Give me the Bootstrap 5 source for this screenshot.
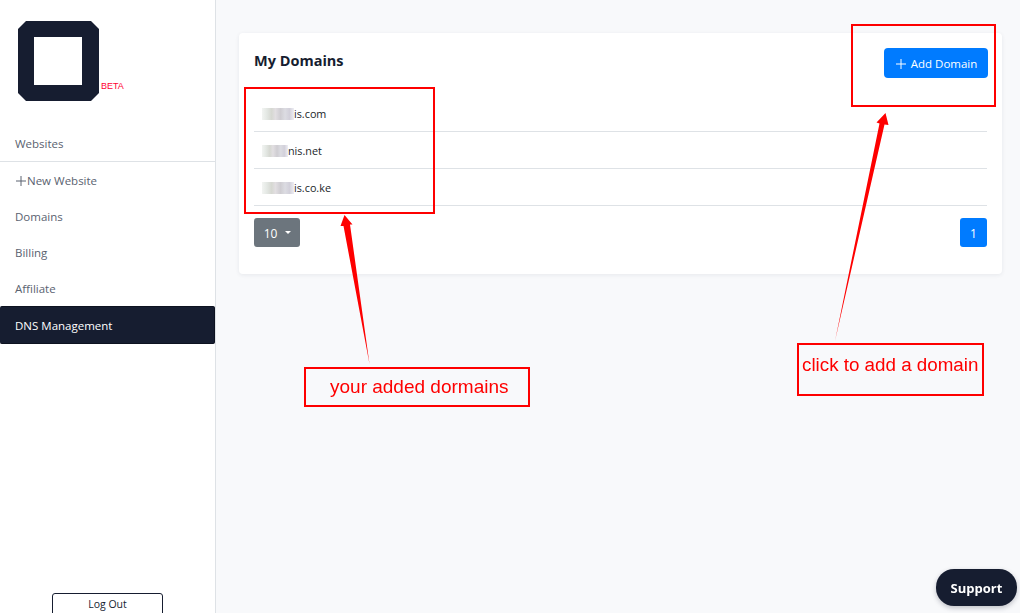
<!DOCTYPE html>
<html lang="en">
<head>
    <meta charset="UTF-8">
    <meta name="viewport" content="width=device-width, initial-scale=1.0">
    <title>My Domains</title>
    <link href="https://cdn.jsdelivr.net/npm/bootstrap@5.3.2/dist/css/bootstrap.min.css" rel="stylesheet">
    <style>
        html, body { height: 100%; overflow: hidden; }
        body { font-family: "Open Sans", "Noto Sans", sans-serif; font-size: 11.5px; color: #161d30; background: #f8f9fb; }
        .app-shell { height: 613px; }
        .side-bar { width: 216px; flex: none; background: #fff; border-right: 1px solid #dee2e6; }
        .logo-wrap { height: 120px; padding: 21px 0 0 18px; }
        .logo-beta { color: #ff0033; font-family: "Liberation Sans", sans-serif; font-size: 9px; line-height: 1; margin: 0 0 10px 2px; }
        .side-item { display: block; height: 36px; line-height: 34px; padding-left: 15px; color: #5a6270; text-decoration: none; }
        .side-first { border-bottom: 1px solid #dee2e6; height: 42px; line-height: 47px; }
        .side-new { display: flex; align-items: center; height: 38px; }
        .side-new svg { margin: 0 1px 0 1px; }
        .side-active { height: 38px; line-height: 37px; margin-top: -2px; color: #fff; font-weight: 500; background: #161d30; border: 1px solid #0d1220; border-left: 0; border-radius: 2px; padding-left: 15px; }
        .logout-btn { width: 111px; height: 28px; margin: auto 0 -8px 52px; padding: 0 0 5px; background: #fff; color: #161d30; font-size: 10.5px; border: 1px solid #161d30; border-radius: 3px; }
        .main-pane { padding: 33px 18px 0 23px; }
        .domains-card { height: 241px; border: 0; border-radius: 4px; box-shadow: 0 1px 4px rgba(30, 40, 70, .08); padding: 15px 15px 0; }
        .domains-title { font-size: 14.5px; font-weight: 700; margin: 4px 0 0; }
        .add-btn { width: 104px; height: 30px; margin-right: -1px; padding: 2px 0 0 1px; font-size: 11.5px; background: #007bff; border: 0; border-radius: 4px; display: flex; align-items: center; justify-content: center; gap: 5px; }
        .domain-list { margin-top: 17px; }
        .domain-row { height: 37px; padding: 2px 0 0 8px; display: flex; align-items: center; font-size: 10.8px; border-color: #dee2e6; background: transparent; }
        .blur-patch { display: inline-block; height: 12px; background: linear-gradient(90deg, #f2f4f2 0, #e4e8e4 15%, #d6d8d2 30%, #e2dfe2 42%, #cfcdd2 58%, #dcdce2 72%, #d2d0da 86%, #eeeef4 100%); }
        .size-btn { width: 46px; height: 29px; padding: 2px 0 0 1px; font-size: 12px; background: #6c757d; border: 0; border-radius: 3px; }
        .size-btn::after { margin-left: 8px; }
        .page-btn { width: 27px; height: 29px; padding: 2px 0 0; font-size: 12px; background: #007bff; border: 0; border-radius: 3px; }
        .support-btn { position: fixed; left: 936px; top: 569px; width: 81px; height: 37px; padding: 2px 0 0; background: #161d30; color: #fff; font-size: 13px; font-weight: 700; border: 0; border-radius: 18px; box-shadow: 0 2px 5px rgba(20, 25, 45, .25); }
        .note-layer { position: fixed; left: 0; top: 0; pointer-events: none; }
        .note-box { position: fixed; border: 2px solid #fe0000; color: #fe0000; font-family: "Liberation Sans", sans-serif; font-size: 19px; white-space: nowrap; }
        .note-added { left: 304px; top: 367px; width: 226px; height: 40px; line-height: 36px; padding-left: 24px; }
        .note-click { left: 797px; top: 343px; width: 187px; height: 53px; line-height: 40px; padding-left: 3px; font-size: 18.8px; }
    </style>
</head>
<body>
    <div class="d-flex app-shell">
        <aside class="side-bar d-flex flex-column">
            <div class="logo-wrap">
                <div class="d-flex align-items-end">
                    <svg width="81" height="80" viewBox="0 0 81 80">
                        <path fill-rule="evenodd" fill="#161d30" d="M8 0H73L81 8V72L73 80H8L0 72V8ZM16 16V64H64V16Z"/>
                    </svg>
                    <span class="logo-beta">BETA</span>
                </div>
            </div>
            <a class="side-item side-first" href="#">Websites</a>
            <a class="side-item side-new" href="#">
                <svg width="10" height="10" viewBox="0 0 10 10"><path d="M5 0V10M0 5H10" stroke="#5a6270" stroke-width="1"/></svg>New Website
            </a>
            <a class="side-item" href="#">Domains</a>
            <a class="side-item" href="#">Billing</a>
            <a class="side-item" href="#">Affiliate</a>
            <a class="side-item side-active" href="#">DNS Management</a>
            <button class="btn logout-btn" type="button">Log Out</button>
        </aside>

        <main class="main-pane flex-grow-1">
            <div class="card domains-card">
                <div class="d-flex justify-content-between align-items-start">
                    <h5 class="domains-title">My Domains</h5>
                    <button class="btn btn-primary add-btn" type="button">
                        <svg width="10" height="10" viewBox="0 0 10 10"><path d="M5 0V10M0 5H10" stroke="#fff" stroke-width="1"/></svg>Add Domain
                    </button>
                </div>
                <div class="list-group list-group-flush domain-list">
                    <div class="list-group-item domain-row"><span class="blur-patch" style="width:32px"></span>is.com</div>
                    <div class="list-group-item domain-row"><span class="blur-patch" style="width:26px"></span>nis.net</div>
                    <div class="list-group-item domain-row border-bottom"><span class="blur-patch" style="width:32px"></span>is.co.ke</div>
                </div>
                <div class="d-flex justify-content-between mt-2 pt-1">
                    <button class="btn btn-secondary dropdown-toggle size-btn" type="button">10</button>
                    <button class="btn btn-primary page-btn" type="button">1</button>
                </div>
            </div>
        </main>
    </div>

    <button class="btn support-btn" type="button">Support</button>

    <!-- annotations drawn over the screenshot -->
    <svg class="note-layer" width="1020" height="613" viewBox="0 0 1020 613">
        <rect x="245" y="88" width="189" height="125" fill="none" stroke="#fe0000" stroke-width="2"/>
        <rect x="852" y="25" width="143" height="81" fill="none" stroke="#fe0000" stroke-width="2"/>
        <polygon fill="#fe0000" points="344.5,215 352.5,224.5 350,224.5 369.5,364 343.5,226 340.5,226"/>
        <polygon fill="#fe0000" points="885.5,113 888.5,125 884.5,124.5 835,341 879.5,123.5 876.5,122.5"/>
    </svg>
    <div class="note-box note-added">your added dormains</div>
    <div class="note-box note-click">click to add a domain</div>

    <script src="https://cdn.jsdelivr.net/npm/bootstrap@5.3.2/dist/js/bootstrap.bundle.min.js"></script>
</body>
</html>
